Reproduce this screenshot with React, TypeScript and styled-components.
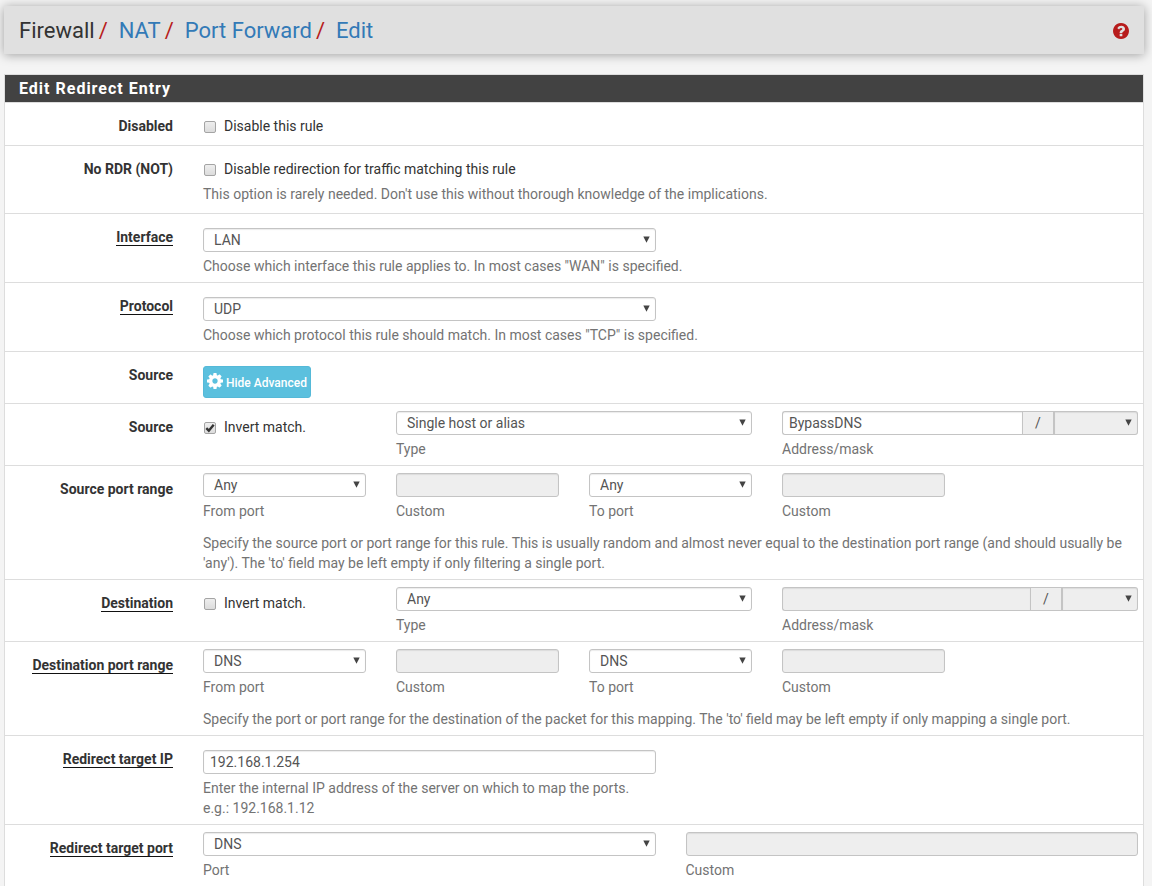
import React, { useId, useState } from 'react';
import styled, { createGlobalStyle } from 'styled-components';

const GlobalStyle = createGlobalStyle`
  *, *::before, *::after { box-sizing: border-box; }
  body {
    margin: 0;
    background: #f4f4f4;
    color: #333;
    font-family: Roboto, "Liberation Sans", sans-serif;
    font-size: 14px;
    line-height: 20px;
  }
  input, select, button { font: inherit; }
`;

const Page = styled.div`
  padding: 6px 8px 0 4px;
`;

const TopBar = styled.header`
  display: flex;
  align-items: center;
  justify-content: space-between;
  height: 48px;
  padding: 1px 15px 0;
  margin-bottom: 20px;
  background: #e0e0e0;
  box-shadow: 0 1px 10px rgba(0, 0, 0, 0.35);
`;

const Crumbs = styled.ol`
  display: flex;
  margin: 0;
  padding: 0;
  list-style: none;
  font-size: 22px;
  line-height: 24px;
`;

const Crumb = styled.li`
  & + &::before {
    content: '/';
    padding: 0 11px 0 4px;
    color: #b71c1c;
  }
`;

const CrumbLink = styled.a`
  color: #337ab7;
  text-decoration: none;
`;

const HelpLink = styled.a`
  display: flex;
  color: #b71c1c;
`;

const Panel = styled.section`
  background: #fff;
  border: 1px solid #ddd;
  border-bottom: 0;
  overflow: hidden;
`;

const PanelTitle = styled.h2`
  margin: 0;
  padding: 4px 14px 3px;
  background: #424242;
  color: #fff;
  font-size: 16px;
  font-weight: 700;
  line-height: 20px;
  letter-spacing: 1px;
`;

const Group = styled.div<{ $bottom?: number }>`
  border-top: 1px solid #ddd;
  padding-bottom: ${(p) => p.$bottom ?? 6}px;
`;

const Row = styled.div`
  display: grid;
  grid-template-columns: repeat(12, minmax(0, 1fr));
  margin: 0 -10px;
`;

const LabelCell = styled.div`
  grid-column: span 2;
  padding: 13px 15px 0;
  text-align: right;
  white-space: nowrap;
`;

const Label = styled.label<{ $required?: boolean }>`
  font-weight: 700;
  border-bottom: ${(p) => (p.$required ? '1px solid #111' : '0')};
`;

const Cell = styled.div<{ $span: number; $top?: number }>`
  grid-column: span ${(p) => p.$span};
  padding: ${(p) => p.$top ?? 7}px 15px 0;
`;

const Help = styled.p<{ $gap?: number }>`
  margin: ${(p) => p.$gap ?? 4}px 0 0;
  color: #737373;
`;

const WideHelp = styled(Help)`
  grid-column: 3 / -1;
  padding: 0 15px;
`;

const Caption = styled.label`
  display: block;
  margin-top: 4px;
  color: #737373;
`;

const control = `
  display: block;
  width: 100%;
  height: 24px;
  border: 1px solid #c4c4c4;
  border-radius: 3px;
  background: #fff;
  color: #555;
  box-shadow: inset 0 1px 1px rgba(0, 0, 0, 0.08);
  &:disabled { background: #eee; opacity: 1; }
`;

const TextInput = styled.input`
  ${control}
  padding: 0 6px;
`;

const SelectBox = styled.select`
  ${control}
  appearance: none;
  padding: 0 24px 0 10px;
`;

const SelectWrap = styled.div`
  position: relative;
  svg {
    position: absolute;
    right: 6px;
    top: 8px;
    pointer-events: none;
  }
`;

const AddressGroup = styled.div<{ $mask: number }>`
  display: grid;
  grid-template-columns: minmax(0, 1fr) 31px ${(p) => p.$mask}px;
  ${TextInput} { border-radius: 3px 0 0 3px; border-right: 0; }
  ${SelectBox} { border-radius: 0 3px 3px 0; border-left-width: 2px; }
`;

const Addon = styled.span`
  border: 1px solid #c4c4c4;
  border-right: 0;
  background: #eee;
  color: #555;
  line-height: 22px;
  text-align: center;
`;

const CheckLabel = styled.label`
  display: flex;
  align-items: center;
  gap: 8px;
`;

const CheckBoxWrap = styled.span`
  position: relative;
  display: block;
  width: 12px;
  height: 12px;
  margin: 2px 0 0 1px;
  svg {
    position: absolute;
    inset: 0;
    pointer-events: none;
  }
`;

const CheckInput = styled.input`
  appearance: none;
  display: block;
  width: 12px;
  height: 12px;
  margin: 0;
  border: 1px solid #a4a4a4;
  border-radius: 2px;
  background: linear-gradient(#eee, #dcdcdc);
`;

const InfoButton = styled.button`
  display: flex;
  align-items: center;
  gap: 3px;
  height: 32px;
  padding: 1px 3px 0;
  border: 1px solid #55b9d8;
  border-radius: 3px;
  background: #5bc0de;
  color: #fff;
  font-size: 12px;
  font-weight: 500;
  line-height: 18px;
  svg { margin-bottom: 4px; }
  span { white-space: nowrap; }
`;

const Gear = () => (
  <svg width="16" height="16" viewBox="0 128 1536 1536" fill="currentColor" aria-hidden="true">
    <path d="M1024 896q0-106-75-181t-181-75-181 75-75 181 75 181 181 75 181-75 75-181zm512-109v222q0 12-8 23t-20 13l-185 28q-19 54-39 91 35 50 107 138 10 12 10 25t-9 23q-27 37-99 108t-94 71q-12 0-26-9l-138-108q-44 23-91 38-16 136-29 186-7 28-36 28h-222q-14 0-24.5-8.500t-11.500-21.500l-28-184q-49-16-90-37l-141 107q-10 9-25 9-14 0-25-11-126-114-165-168-7-10-7-23 0-12 8-23 15-21 51-66.500t54-70.500q-27-50-41-99l-183-27q-13-2-21-12.500t-8-23.500v-222q0-12 8-23t19-13l186-28q14-46 39-92-40-57-107-138-10-12-10-24 0-10 9-23 26-36 98.500-107.500t94.500-71.500q13 0 26 10l138 107q44-23 91-38 16-136 29-186 7-28 36-28h222q14 0 24.500 8.500t11.500 21.500l28 184q49 16 90 37l142-107q9-9 24-9 13 0 25 10 129 119 165 170 7 8 7 22 0 12-8 23-15 21-51 66.500t-54 70.500q26 50 41 98l183 28q13 2 21 12.500t8 23.500z" />
  </svg>
);

const QuestionCircle = () => (
  <svg width="16" height="16" viewBox="128 128 1536 1536" fill="currentColor" aria-hidden="true">
    <path d="M1024 1376v-192q0-14-9-23t-23-9h-192q-14 0-23 9t-9 23v192q0 14 9 23t23 9h192q14 0 23-9t9-23zm256-672q0-88-55.500-163t-138.500-116-170-41q-243 0-371 213-15 24 8 42l132 100q7 6 19 6 16 0 25-12 53-68 86-92 34-24 86-24 48 0 85.500 26t37.500 59q0 38-20 61t-68 45q-63 28-115.500 86.500t-52.500 125.500v36q0 14 9 23t23 9h192q14 0 23-9t9-23q0-19 21.500-49.500t54.500-49.500q32-18 49-28.500t46-35 44.500-48 28-60.500 12.500-81zm384 192q0 209-103 385.500t-279.500 279.500-385.500 103-385.500-103-279.500-279.500-103-385.500 103-385.500 279.500-279.500 385.500-103 385.500 103 279.500 279.500 103 385.500z" />
  </svg>
);

type SelectProps = { id?: string; options: string[]; disabled?: boolean; label?: string };

function Select({ id, options, disabled, label }: SelectProps) {
  return (
    <SelectWrap>
      <SelectBox id={id} disabled={disabled} aria-label={label}>
        {options.map((o) => (
          <option key={o}>{o}</option>
        ))}
      </SelectBox>
      <svg width="7" height="7" viewBox="0 0 7 7" fill="#444" aria-hidden="true">
        <path d="M0.300 0.500H6.700L3.500 6.700Z" />
      </svg>
    </SelectWrap>
  );
}

function Checkbox({ id, text, initial = false }: { id: string; text: string; initial?: boolean }) {
  const [checked, setChecked] = useState(initial);
  return (
    <CheckLabel>
      <CheckBoxWrap>
        <CheckInput id={id} type="checkbox" checked={checked} onChange={() => setChecked(!checked)} />
        {checked && (
          <svg width="12" height="12" viewBox="0 0 12 12" fill="none" stroke="#333" strokeWidth="2.400" aria-hidden="true">
            <path d="M2.300 6.200L4.800 8.700L9.700 2.700" />
          </svg>
        )}
      </CheckBoxWrap>
      {text}
    </CheckLabel>
  );
}

function FieldLabel({ id, text, required }: { id: string; text: string; required?: boolean }) {
  return (
    <LabelCell>
      <Label htmlFor={id} $required={required}>{text}</Label>
    </LabelCell>
  );
}

function SelectField({ text, options, help }: { text: string; options: string[]; help: string }) {
  const id = useId();
  return (
    <Group>
      <Row>
        <FieldLabel id={id} text={text} required />
        <Cell $span={5} $top={14}>
          <Select id={id} options={options} />
        </Cell>
        <WideHelp>{help}</WideHelp>
      </Row>
    </Group>
  );
}

function CaptionedSelect({ span, caption, options }: { span: number; caption: string; options: string[] }) {
  const id = useId();
  return (
    <Cell $span={span}>
      <Select id={id} options={options} />
      <Caption htmlFor={id}>{caption}</Caption>
    </Cell>
  );
}

function CustomInput({ span }: { span: number }) {
  const id = useId();
  return (
    <Cell $span={span}>
      <TextInput id={id} type="text" disabled />
      <Caption htmlFor={id}>Custom</Caption>
    </Cell>
  );
}

type EndpointProps = {
  text: string;
  required?: boolean;
  inverted?: boolean;
  types: string[];
  address?: string;
  mask: number;
};

function Endpoint({ text, required, inverted, types, address, mask }: EndpointProps) {
  const id = useId();
  const addressId = useId();
  return (
    <Group>
      <Row>
        <FieldLabel id={id} text={text} required={required} />
        <Cell $span={2} $top={13}>
          <Checkbox id={id} text="Invert match." initial={inverted} />
        </Cell>
        <CaptionedSelect span={4} caption="Type" options={types} />
        <Cell $span={4}>
          <AddressGroup $mask={mask}>
            <TextInput id={addressId} type="text" defaultValue={address} disabled={!address} />
            <Addon>/</Addon>
            <Select options={['']} disabled label="Mask" />
          </AddressGroup>
          <Caption htmlFor={addressId}>Address/mask</Caption>
        </Cell>
      </Row>
    </Group>
  );
}

function PortRange({ text, required, port, help }: { text: string; required?: boolean; port: string; help: string }) {
  return (
    <Group>
      <Row role="group" aria-label={text}>
        <LabelCell>
          <Label as="span" $required={required}>{text}</Label>
        </LabelCell>
        <CaptionedSelect span={2} caption="From port" options={[port]} />
        <CustomInput span={2} />
        <CaptionedSelect span={2} caption="To port" options={[port]} />
        <CustomInput span={2} />
        <WideHelp $gap={12}>{help}</WideHelp>
      </Row>
    </Group>
  );
}

export default function App() {
  return (
    <>
      <GlobalStyle />
      <Page>
        <TopBar>
          <nav aria-label="Breadcrumb">
            <Crumbs>
              <Crumb>Firewall</Crumb>
              <Crumb><CrumbLink href="#nat">NAT</CrumbLink></Crumb>
              <Crumb><CrumbLink href="#port-forward">Port Forward</CrumbLink></Crumb>
              <Crumb><CrumbLink href="#edit">Edit</CrumbLink></Crumb>
            </Crumbs>
          </nav>
          <HelpLink href="#help" aria-label="Help"><QuestionCircle /></HelpLink>
        </TopBar>

        <Panel as="form">
          <PanelTitle>Edit Redirect Entry</PanelTitle>

          <Group $bottom={9}>
            <Row>
              <FieldLabel id="disabled" text="Disabled" />
              <Cell $span={10} $top={13}>
                <Checkbox id="disabled" text="Disable this rule" />
              </Cell>
            </Row>
          </Group>

          <Group $bottom={9}>
            <Row>
              <FieldLabel id="nordr" text="No RDR (NOT)" />
              <Cell $span={10} $top={13}>
                <Checkbox id="nordr" text="Disable redirection for traffic matching this rule" />
                <Help $gap={5}>
                  This option is rarely needed. Don't use this without thorough knowledge of the implications.
                </Help>
              </Cell>
            </Row>
          </Group>

          <SelectField
            text="Interface"
            options={['LAN', 'WAN']}
            help={'Choose which interface this rule applies to. In most cases "WAN" is specified.'}
          />
          <SelectField
            text="Protocol"
            options={['UDP', 'TCP']}
            help={'Choose which protocol this rule should match. In most cases "TCP" is specified.'}
          />

          <Group $bottom={5}>
            <Row>
              <FieldLabel id="advanced" text="Source" />
              <Cell $span={10} $top={14}>
                <InfoButton id="advanced" type="button"><Gear /><span>Hide Advanced</span></InfoButton>
              </Cell>
            </Row>
          </Group>

          <Endpoint text="Source" inverted types={['Single host or alias', 'Any']} address="BypassDNS" mask={85} />
          <PortRange
            text="Source port range"
            port="Any"
            help="Specify the source port or port range for this rule. This is usually random and almost never equal to the destination port range (and should usually be 'any'). The 'to' field may be left empty if only filtering a single port."
          />
          <Endpoint text="Destination" required types={['Any', 'Single host or alias']} mask={77} />
          <PortRange
            text="Destination port range"
            required
            port="DNS"
            help="Specify the port or port range for the destination of the packet for this mapping. The 'to' field may be left empty if only mapping a single port."
          />

          <Group>
            <Row>
              <FieldLabel id="target-ip" text="Redirect target IP" required />
              <Cell $span={5} $top={14}>
                <TextInput id="target-ip" type="text" defaultValue="192.168.1.254" />
                <Help>
                  Enter the internal IP address of the server on which to map the ports.
                  <br />
                  e.g.: 192.168.1.12
                </Help>
              </Cell>
            </Row>
          </Group>

          <Group>
            <Row>
              <LabelCell>
                <Label as="span" $required>Redirect target port</Label>
              </LabelCell>
              <CaptionedSelect span={5} caption="Port" options={['DNS']} />
              <CustomInput span={5} />
            </Row>
          </Group>
        </Panel>
      </Page>
    </>
  );
}
